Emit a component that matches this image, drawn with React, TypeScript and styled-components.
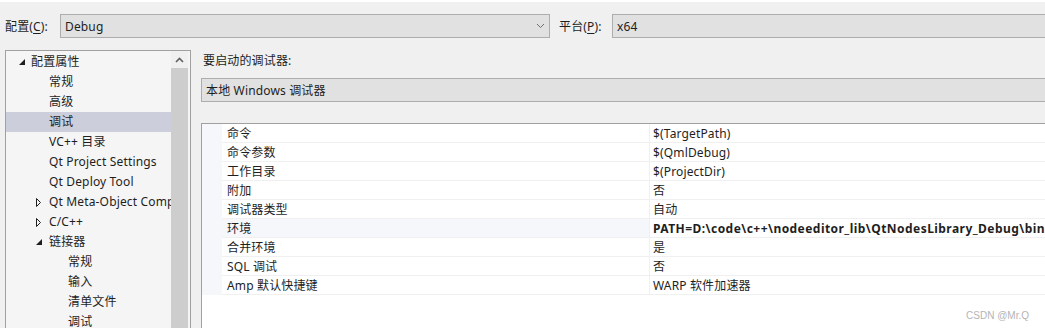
import React from "react";
import styled, { createGlobalStyle } from "styled-components";

const GlobalStyle = createGlobalStyle`
  html, body {
    margin: 0;
    padding: 0;
    background: #f0f0f0;
    overflow: hidden;
  }
  body {
    font-family: "Noto Sans", "Noto Sans CJK SC", sans-serif;
    font-size: 12px;
    letter-spacing: 0.15px;
    color: #1e1e1e;
  }
`;

const Page = styled.div`
  position: relative;
  width: 1045px;
  height: 328px;
  overflow: hidden;
  border-top: 2px solid #ffffff;
  box-sizing: border-box;
`;

const TopBar = styled.div`
  display: flex;
  align-items: center;
  height: 24px;
  margin-top: 12px;
  padding-left: 5px;
`;

const Label = styled.span<{ $width?: number; $gap?: number }>`
  width: ${(p) => p.$width ?? 55}px;
  margin-left: ${(p) => p.$gap ?? 0}px;
  flex: none;
  white-space: nowrap;
  u {
    text-decoration: underline;
    text-underline-offset: 2px;
  }
`;

const Combo = styled.div<{ $width?: number }>`
  display: flex;
  align-items: center;
  box-sizing: border-box;
  height: 24px;
  ${(p) => (p.$width ? `width: ${p.$width}px; flex: none;` : "flex: 1; margin-right: -30px;")}
  padding: 0 4px;
  background: #e1e1e1;
  border: 1px solid #adadad;
  white-space: nowrap;
`;

const ComboText = styled.span`
  flex: 1;
`;

const Body = styled.div`
  display: flex;
  margin-top: 12px;
  padding-left: 5px;
  height: 300px;
`;

const Tree = styled.div`
  display: flex;
  width: 186px;
  flex: none;
  box-sizing: border-box;
  border: 1px solid #a0a0a0;
  border-bottom: none;
  background: #f5f5f5;
`;

const TreeList = styled.div`
  width: 165px;
  padding-top: 1px;
  flex: none;
`;

const TreeRow = styled.div<{ $level: number; $selected?: boolean }>`
  position: relative;
  height: 20px;
  line-height: 20px;
  padding-left: ${(p) => [25, 43, 62][p.$level]}px;
  background: ${(p) => (p.$selected ? "#cccedb" : "transparent")};
  white-space: nowrap;
  overflow: hidden;
`;

const Toggle = styled.span<{ $left: number }>`
  position: absolute;
  top: 0;
  left: ${(p) => p.$left}px;
  width: 10px;
  height: 20px;
  display: flex;
  align-items: center;
`;

const ScrollBar = styled.div`
  width: 17px;
  flex: none;
  display: flex;
  flex-direction: column;
  background: #f0f0f0;
`;

const ScrollArrow = styled.div`
  height: 17px;
  display: flex;
  align-items: center;
  justify-content: center;
`;

const ScrollThumb = styled.div`
  flex: 1;
  background: #cdcdcd;
`;

const Right = styled.div`
  flex: 1;
  margin-left: 10px;
  display: flex;
  flex-direction: column;
  min-width: 0;
`;

const SectionLabel = styled.div`
  height: 22px;
  line-height: 22px;
  padding-left: 2px;
`;

const DebuggerCombo = styled(Combo)`
  margin-top: 6px;
  flex: none;
  width: 870px;
`;

const Grid = styled.div`
  margin-top: 21px;
  flex: 1;
  margin-right: -30px;
  background: #ffffff;
  border-top: 1px solid #a0a0a0;
  border-left: 1px solid #a0a0a0;
`;

const GridRow = styled.div`
  display: flex;
  height: 19px;
`;

const Gutter = styled.div`
  width: 20px;
  flex: none;
  background: #f5f7fb;
`;

const Cell = styled.div`
  box-sizing: border-box;
  height: 19px;
  padding-top: 2px;
  line-height: 16px;
  border-bottom: 1px solid #f0f0f0;
  white-space: nowrap;
  overflow: hidden;
`;

const NameCell = styled(Cell)<{ $active?: boolean }>`
  width: 428px;
  flex: none;
  padding-left: 5px;
  border-right: 1px solid #f0f0f0;
  background: ${(p) => (p.$active ? "#f5f7fb" : "#ffffff")};
`;

const ValueCell = styled(Cell)<{ $bold?: boolean }>`
  flex: 1;
  padding-left: 3px;
  font-weight: ${(p) => (p.$bold ? 700 : 400)};
  letter-spacing: ${(p) => (p.$bold ? 0.45 : 0.15)}px;
`;

const Watermark = styled.div`
  position: absolute;
  right: 16px;
  bottom: 7px;
  font-size: 10px;
  letter-spacing: 0;
  color: #b4b4b4;
  font-family: "Liberation Sans", "Noto Sans", sans-serif;
`;

const Chevron = ({ up }: { up?: boolean }) => (
  <svg width="9" height="6" viewBox="0 0 9 6">
    <polyline
      points={up ? "1,5 4.5,1.5 8,5" : "1,1 4.5,4.5 8,1"}
      fill="none"
      stroke={up ? "#606060" : "#707070"}
      strokeWidth={up ? 1.6 : 1}
    />
  </svg>
);

const Expanded = () => (
  <svg width="6" height="6" viewBox="0 0 6 6">
    <polygon points="6,0 6,6 0,6" fill="#1e1e1e" />
  </svg>
);

const Collapsed = () => (
  <svg width="5" height="9" viewBox="0 0 5 9">
    <polygon points="0.5,0.5 4.5,4.5 0.5,8.5" fill="none" stroke="#1e1e1e" strokeWidth="1" />
  </svg>
);

type TreeItem = { text: string; level: number; toggle?: "open" | "closed"; selected?: boolean };

const treeItems: TreeItem[] = [
  { text: "配置属性", level: 0, toggle: "open" },
  { text: "常规", level: 1 },
  { text: "高级", level: 1 },
  { text: "调试", level: 1, selected: true },
  { text: "VC++ 目录", level: 1 },
  { text: "Qt Project Settings", level: 1 },
  { text: "Qt Deploy Tool", level: 1 },
  { text: "Qt Meta-Object Compiler", level: 1, toggle: "closed" },
  { text: "C/C++", level: 1, toggle: "closed" },
  { text: "链接器", level: 1, toggle: "open" },
  { text: "常规", level: 2 },
  { text: "输入", level: 2 },
  { text: "清单文件", level: 2 },
  { text: "调试", level: 2 },
];

const props: { name: string; value: string; bold?: boolean; active?: boolean }[] = [
  { name: "命令", value: "$(TargetPath)" },
  { name: "命令参数", value: "$(QmlDebug)" },
  { name: "工作目录", value: "$(ProjectDir)" },
  { name: "附加", value: "否" },
  { name: "调试器类型", value: "自动" },
  {
    name: "环境",
    value: "PATH=D:\\code\\c++\\nodeeditor_lib\\QtNodesLibrary_Debug\\bin",
    bold: true,
    active: true,
  },
  { name: "合并环境", value: "是" },
  { name: "SQL 调试", value: "否" },
  { name: "Amp 默认快捷键", value: "WARP 软件加速器" },
];

export default function App() {
  return (
    <Page>
      <GlobalStyle />
      <TopBar>
        <Label>
          配置(<u>C</u>):
        </Label>
        <Combo $width={490}>
          <ComboText>Debug</ComboText>
          <Chevron />
        </Combo>
        <Label $width={53} $gap={9}>
          平台(<u>P</u>):
        </Label>
        <Combo>
          <ComboText>x64</ComboText>
        </Combo>
      </TopBar>
      <Body>
        <Tree>
          <TreeList>
            {treeItems.map((item, i) => (
              <TreeRow key={i} $level={item.level} $selected={item.selected}>
                {item.toggle && (
                  <Toggle $left={item.level === 0 ? 13 : 30}>
                    {item.toggle === "open" ? <Expanded /> : <Collapsed />}
                  </Toggle>
                )}
                {item.text}
              </TreeRow>
            ))}
          </TreeList>
          <ScrollBar>
            <ScrollArrow>
              <Chevron up />
            </ScrollArrow>
            <ScrollThumb />
          </ScrollBar>
        </Tree>
        <Right>
          <SectionLabel>要启动的调试器:</SectionLabel>
          <DebuggerCombo>
            <ComboText>本地 Windows 调试器</ComboText>
          </DebuggerCombo>
          <Grid>
            {props.map((p, i) => (
              <GridRow key={i}>
                <Gutter />
                <NameCell $active={p.active}>{p.name}</NameCell>
                <ValueCell $bold={p.bold}>{p.value}</ValueCell>
              </GridRow>
            ))}
          </Grid>
        </Right>
      </Body>
      <Watermark>CSDN @Mr.Q</Watermark>
    </Page>
  );
}
